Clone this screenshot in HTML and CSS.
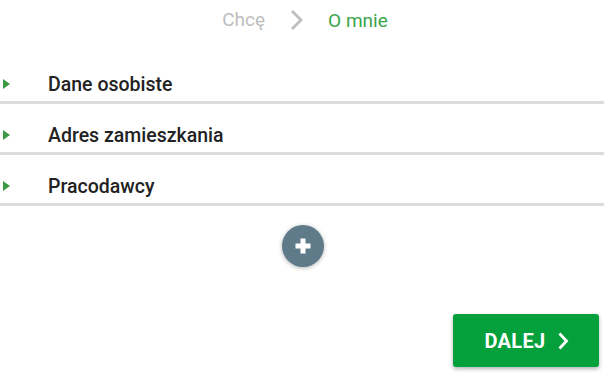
FILE: index.html
```html
<!DOCTYPE html>
<html lang="pl">
<head>
<meta charset="utf-8">
<link rel="stylesheet" href="styles.css">
</head>
<body>
<div class="page">
  <nav class="crumbs">
    <span class="crumb">Chcę</span>
    <svg class="crumb-sep" width="13" height="22" viewBox="0 0 13 22"><path d="M2 2 L11 11 L2 20" fill="none" stroke="#bdbdbd" stroke-width="2.8"/></svg>
    <span class="crumb active">O mnie</span>
  </nav>
  <ul class="sections">
    <li class="section"><span class="tri"></span><span class="label">Dane osobiste</span></li>
    <li class="section"><span class="tri"></span><span class="label">Adres zamieszkania</span></li>
    <li class="section"><span class="tri"></span><span class="label">Pracodawcy</span></li>
  </ul>
  <div class="add-wrap">
    <button class="add" aria-label="Dodaj">
      <svg width="18" height="18" viewBox="0 0 18 18"><path d="M9 1.5 V16.5 M1.5 9 H16.5" stroke="#fff" stroke-width="5" stroke-linecap="butt"/></svg>
    </button>
  </div>
  <div class="footer">
    <button class="next">DALEJ
      <svg width="12" height="20" viewBox="0 0 12 20"><path d="M2.5 2.5 L9.5 10 L2.5 17.5" fill="none" stroke="#fff" stroke-width="2.8"/></svg>
    </button>
  </div>
</div>
</body>
</html>
```
FILE: styles.css
```css
html, body {
  margin: 0;
  padding: 0;
  background: #fff;
}
body {
  font-family: Roboto, "Liberation Sans", sans-serif;
  width: 604px;
  height: 379px;
  overflow: hidden;
}
.crumbs {
  display: flex;
  justify-content: center;
  align-items: center;
  gap: 25px;
  padding-top: 8px;
  height: 24px;
  margin-left: 6px;
  font-size: 19px;
  line-height: 24px;
}
.crumb {
  color: #bdbdbd;
}
.crumb.active {
  color: #3aa54a;
  position: relative;
  top: 1px;
}
.crumb-sep {
  display: block;
}
.sections {
  list-style: none;
  margin: 21px 0 0 0;
  padding: 0;
}
.section {
  display: flex;
  align-items: center;
  height: 48px;
  box-sizing: content-box;
  border-bottom: 3px solid #dcdcdc;
}
.section .tri {
  width: 0;
  height: 0;
  border-top: 5.5px solid transparent;
  border-bottom: 5.5px solid transparent;
  border-left: 7px solid #3c9a45;
  margin-left: 3px;
  margin-top: 14px;
}
.section .label {
  margin-left: 38px;
  margin-top: 15px;
  font-size: 19.5px;
  font-weight: 500;
  line-height: 23px;
  color: #222;
}
.add-wrap {
  display: flex;
  justify-content: center;
  padding-top: 19px;
  padding-left: 2px;
}
.add {
  width: 42px;
  height: 42px;
  border-radius: 50%;
  border: none;
  padding: 0;
  background: #5f7a88;
  box-shadow: 0 1px 4px rgba(0,0,0,0.3);
  display: flex;
  align-items: center;
  justify-content: center;
}
.add svg { display: block; }
.footer {
  display: flex;
  justify-content: flex-end;
  padding-right: 5px;
  margin-top: 47px;
}
.next {
  width: 146px;
  height: 53px;
  border: none;
  border-radius: 3px;
  background: #03a03b;
  color: #fff;
  font-family: Roboto, "Liberation Sans", sans-serif;
  font-size: 20px;
  font-weight: 700;
  letter-spacing: 0.3px;
  display: flex;
  align-items: center;
  justify-content: center;
  gap: 12px;
  padding: 0 0 0 2px;
  box-shadow: 0 2px 4px rgba(0,0,0,0.3);
}
.next svg { display: block; }
```
